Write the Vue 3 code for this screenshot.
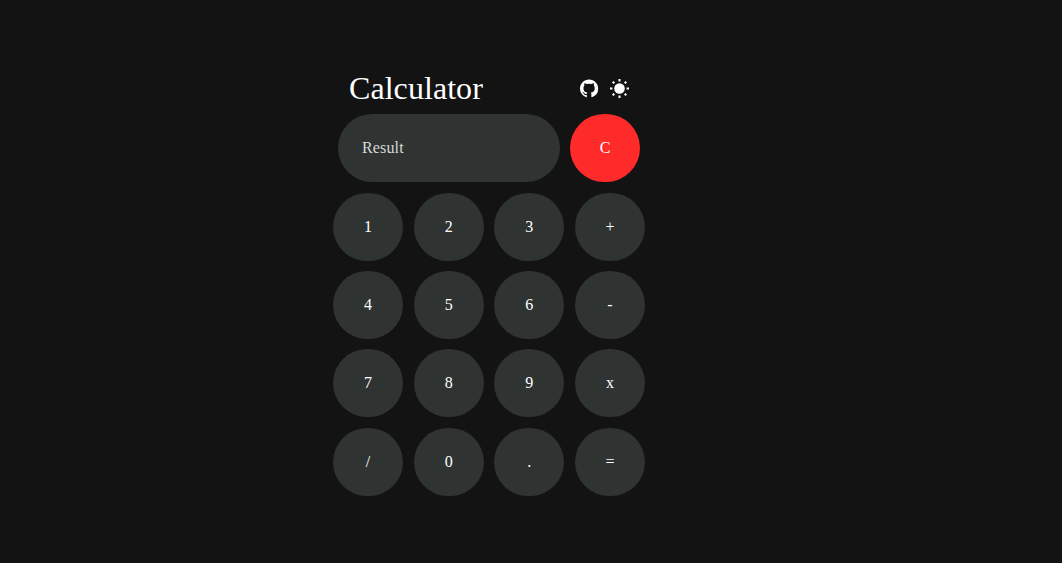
<script setup>
const rows = [
  ['1', '2', '3', '+'],
  ['4', '5', '6', '-'],
  ['7', '8', '9', 'x'],
  ['/', '0', '.', '='],
]
</script>

<template>
  <main class="page">
    <section class="calculator">
      <header class="header">
        <h1 class="title">Calculator</h1>
        <nav class="actions">
          <svg class="icon" viewBox="0 0 24 24" aria-label="GitHub">
            <path
              d="M11.5 .5C5.15.5 0 5.65 0 12c0 5.08 3.29 9.39 7.86 10.91.58.11.79-.25.79-.55v-2.15c-3.2.7-3.87-1.36-3.87-1.36-.52-1.33-1.28-1.69-1.28-1.69-1.04-.71.08-.7.08-.7 1.16.08 1.77 1.19 1.77 1.19 1.03 1.76 2.7 1.25 3.35.96.1-.75.4-1.25.73-1.54-2.55-.29-5.04-1.28-5.04-5.69 0-1.25.45-2.28 1.19-3.08-.12-.3-.52-1.47.11-3.05 0 0 .97-.31 3.16 1.17a10.9 10.9 0 0 1 5.3 0c2.2-1.48 3.16-1.17 3.16-1.17.63 1.58.23 2.75.11 3.05.74.8 1.19 1.83 1.19 3.08 0 4.42-2.5 5.39-5.06 5.68.41.35.78 1.06.78 2.13v3.17c0 .31.2.67.79.55A11.5 11.5 0 0 0 23 12C23 5.65 17.85.5 11.5.5z"
            />
          </svg>
          <svg class="icon" viewBox="0 0 19 19" aria-label="Light mode">
            <circle cx="9.5" cy="9.5" r="5.3" />
            <path
              class="rays"
              d="M9.5 0v2.4M9.5 16.6V19M0 9.5h2.4M16.6 9.5H19M2.7 2.7l1.6 1.6M14.7 14.7l1.6 1.6M2.7 16.3l1.6-1.6M14.7 4.3l1.6-1.6"
            />
          </svg>
        </nav>
      </header>

      <div class="display">
        <input class="result" type="text" placeholder="Result" readonly />
        <button class="key clear">C</button>
      </div>

      <div class="keypad">
        <template v-for="(row, i) in rows" :key="i">
          <button v-for="label in row" :key="label" class="key">{{ label }}</button>
        </template>
      </div>
    </section>
  </main>
</template>

<style>
body {
  margin: 0;
  background: #131313;
}
</style>

<style scoped>
.page {
  box-sizing: border-box;
  height: 563px;
  padding: 64px 0 0 333px;
  background: #131313;
  color: #fff;
  font-family: "Liberation Serif", "Times New Roman", serif;
}
.calculator {
  width: 312px;
}
.header {
  box-sizing: border-box;
  display: flex;
  align-items: center;
  justify-content: space-between;
  height: 50px;
  padding: 0 16px 1px 16px;
}
.title {
  margin: 0 0 1px;
  font-size: 32px;
  font-weight: 400;
  line-height: 36px;
  letter-spacing: 0.06px;
}
.actions {
  display: flex;
  gap: 11px;
}
.icon {
  display: block;
  width: 19px;
  height: 19px;
  fill: #fff;
}
.rays {
  fill: none;
  stroke: #fff;
  stroke-width: 2;
}
.display {
  display: flex;
  gap: 10px;
  padding: 0 5px;
}
.result {
  box-sizing: border-box;
  width: 222px;
  height: 68px;
  padding: 0 24px;
  border: 0;
  border-radius: 35px;
  outline: 0;
  background: #2f3332;
  color: #fff;
  font-family: inherit;
  font-size: 16px;
  letter-spacing: 0.15px;
}
.result::placeholder {
  color: #d9d9d9;
  opacity: 1;
}
.keypad {
  display: grid;
  grid-template-columns: repeat(4, 70px);
  justify-content: space-between;
  row-gap: 10.2px;
  margin-top: 11px;
}
.key {
  width: 70px;
  height: 68px;
  padding: 0;
  border: 0;
  border-radius: 35px;
  background: #2f3332;
  color: #fff;
  font-family: inherit;
  font-size: 16px;
}
.clear {
  background: #ff2b2b;
}
</style>
